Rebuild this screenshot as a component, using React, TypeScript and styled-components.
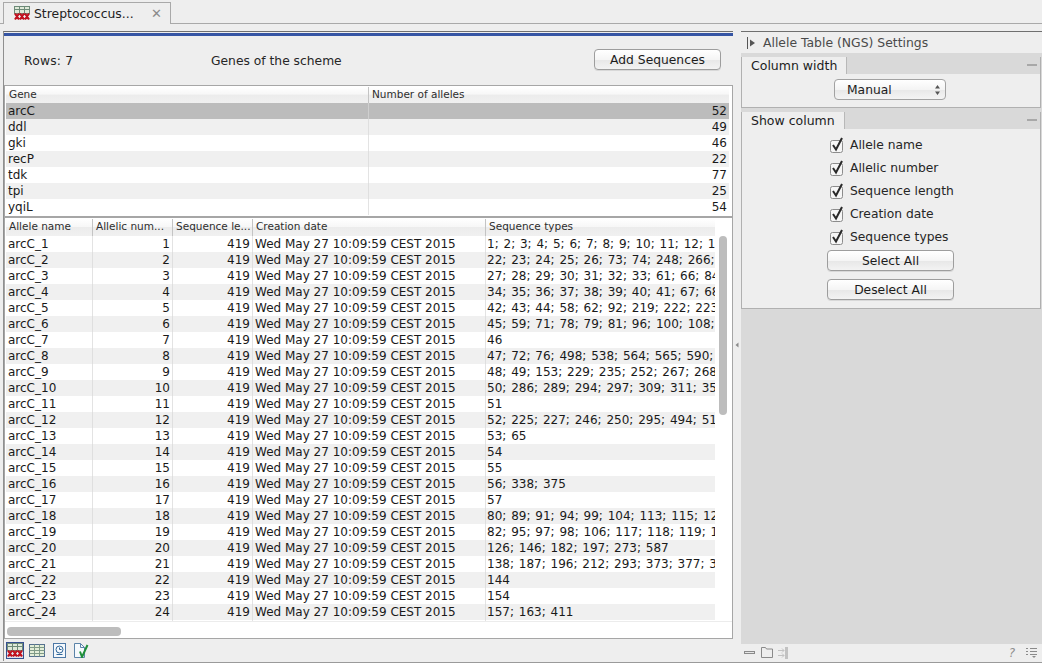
import React from "react";
import styled, { createGlobalStyle } from "styled-components";

const GlobalStyle = createGlobalStyle`
  html, body {
    margin: 0;
    padding: 0;
    height: 100%;
    background: #eeeeee;
    overflow: hidden;
  }
  #root {
    height: 100%;
  }
`;

const Window = styled.div`
  width: 1042px;
  height: 663px;
  display: flex;
  flex-direction: column;
  background: #eeeeee;
  color: #1c1c1c;
  font-family: "DejaVu Sans", Verdana, sans-serif;
  font-size: 12px;
  overflow: hidden;
`;

const TabBar = styled.div`
  height: 24px;
  flex-shrink: 0;
  display: flex;
  padding: 2px 0 0 3px;
  box-sizing: border-box;
  border-bottom: 1px solid #a9a9a9;
`;

const Tab = styled.div`
  width: 168px;
  height: 22px;
  margin-bottom: -1px;
  box-sizing: border-box;
  display: flex;
  align-items: center;
  gap: 4px;
  padding: 0 8px 1px 10px;
  background: #eeeeee;
  border: 1px solid #a9a9a9;
  border-bottom: none;
  font-size: 12.4px;
`;

const TabTitle = styled.span`
  flex: 1;
  color: #222;
`;

const TabClose = styled.span`
  color: #8a8a8a;
  font-size: 13px;
  line-height: 1;
`;

const Body = styled.div`
  flex: 1;
  display: flex;
  min-height: 0;
  padding: 7px 0 1px 3px;
  border-bottom: 1px solid #9a9a9a;
`;

const LeftPanel = styled.div`
  width: 730px;
  flex-shrink: 0;
  display: flex;
  flex-direction: column;
  box-sizing: border-box;
  border-left: 1px solid #8f8f8f;
  border-top: 1px solid #6f6f6f;
`;

const BlueBar = styled.div`
  height: 3px;
  margin-top: 1px;
  background: #3655a4;
  flex-shrink: 0;
`;

const SummaryBar = styled.div`
  height: 49px;
  flex-shrink: 0;
  box-sizing: border-box;
  display: flex;
  align-items: center;
  padding: 0 12px 2px 20px;
  font-size: 12.3px;
  color: #262626;
`;

const RowCount = styled.span`
  width: 187px;
  padding-top: 2px;
  letter-spacing: 0.2px;
`;

const SummaryTitle = styled.span`
  flex: 1;
  padding-top: 2px;
`;

const PushButton = styled.button<{ $width: number }>`
  width: ${(p) => p.$width}px;
  height: 21px;
  padding: 0;
  box-sizing: border-box;
  border: 1px solid #9d9d9d;
  border-radius: 4px;
  background: linear-gradient(#ffffff, #f5f5f5 50%, #e8e8e8 55%, #f3f3f3);
  box-shadow: 0 1px 0 #d8d8d8;
  font-family: inherit;
  font-size: 12.3px;
  color: #1c1c1c;
`;

const TableFrame = styled.div<{ $height?: number }>`
  position: relative;
  flex: ${(p) => (p.$height ? `0 0 ${p.$height}px` : "1")};
  min-height: 0;
  overflow: hidden;
  box-sizing: border-box;
  background: #ffffff;
  border: 1px solid #a6a6a6;
  padding: 1px 3px 0 1px;
`;

const HeaderRow = styled.div<{ $columns: string; $height: number }>`
  display: grid;
  grid-template-columns: ${(p) => p.$columns};
  height: ${(p) => p.$height}px;
  box-sizing: border-box;
  background: linear-gradient(#ffffff, #f7f7f7 45%, #ececec 50%, #f0f0f0);
  font-size: 10.5px;
  color: #2e2e2e;
`;

const HeaderCell = styled.div`
  padding: 0 0 0 3px;
  line-height: 15px;
  white-space: nowrap;
  overflow: hidden;
  border-left: 1px solid #c4c4c4;
  &:first-child {
    border-left: none;
  }
`;

const DataRow = styled.div<{ $columns: string; $selected?: boolean; $odd: boolean }>`
  display: grid;
  grid-template-columns: ${(p) => p.$columns};
  height: 16px;
  line-height: 17px;
  background: ${(p) => (p.$selected ? "#bcbcbc" : p.$odd ? "#f0f0f0" : "#ffffff")};
  font-size: 12px;
  color: #1a1a1a;
  white-space: nowrap;
`;

const Cell = styled.div<{ $right?: boolean }>`
  padding: 0 2px;
  overflow: hidden;
  text-align: ${(p) => (p.$right ? "right" : "left")};
  border-left: 1px solid rgba(215, 215, 215, 0.7);
  &:first-child {
    border-left: none;
  }
`;

const TypesCell = styled(Cell)`
  padding-left: 1px;
  word-spacing: 1px;
`;

const AlleleHeaderWrap = styled.div`
  width: 709px;
`;

const AlleleRows = styled.div`
  width: 709px;
`;

const VerticalThumb = styled.div`
  position: absolute;
  top: 18px;
  right: 5px;
  width: 8px;
  height: 179px;
  border-radius: 4px;
  background: #bdbdbd;
`;

const HorizontalTrack = styled.div`
  position: absolute;
  left: 0;
  right: 0;
  bottom: 0;
  height: 16px;
  background: #ffffff;
  border-top: 1px solid #ececec;
`;

const HorizontalThumb = styled.div`
  position: absolute;
  left: 2px;
  bottom: 2px;
  width: 114px;
  height: 9px;
  border-radius: 4px;
  background: #bdbdbd;
`;

const ViewToolbar = styled.div`
  height: 22px;
  flex-shrink: 0;
  display: flex;
  align-items: center;
  gap: 4px;
  padding-left: 2px;
`;

const ViewButton = styled.div<{ $active?: boolean }>`
  width: 18px;
  height: 17px;
  display: flex;
  align-items: center;
  justify-content: center;
  box-sizing: border-box;
  border: 1px solid ${(p) => (p.$active ? "#35508f" : "transparent")};
  background: ${(p) => (p.$active ? "#dfe3ee" : "transparent")};
`;

const Splitter = styled.div`
  width: 8px;
  flex-shrink: 0;
  display: flex;
  align-items: center;
  justify-content: center;
  padding-bottom: 2px;
`;

const SidePanel = styled.div`
  flex: 1;
  min-width: 0;
  display: flex;
  flex-direction: column;
  border-top: 1px solid #6f6f6f;
`;

const SideHeader = styled.div`
  height: 21px;
  flex-shrink: 0;
  display: flex;
  align-items: center;
  gap: 6px;
  padding-left: 6px;
  font-size: 12.4px;
  color: #4a4a4a;
`;

const SideContent = styled.div`
  flex: 1;
  min-height: 0;
  background: #d9d9d9;
  padding-top: 4px;
  display: flex;
  flex-direction: column;
  gap: 4px;
`;

const Group = styled.section`
  margin-right: 1px;
  background: #eeeeee;
  border: 1px solid #b0b0b0;
  border-top: none;
`;

const GroupTitleRow = styled.div`
  height: 17px;
  display: flex;
  background: #d9d9d9;
`;

const GroupTitle = styled.div`
  padding: 0 9px;
  background: #eeeeee;
  border-right: 1px solid #b8b8b8;
  font-size: 12.5px;
  line-height: 17px;
  color: #1c1c1c;
`;

const Collapse = styled.div`
  margin: 7px 3px 0 auto;
  width: 10px;
  height: 2px;
  background: #a8a8a8;
`;

const SelectBox = styled.div`
  width: 112px;
  height: 21px;
  margin: 5px 0 7px 92px;
  box-sizing: border-box;
  display: flex;
  align-items: center;
  justify-content: space-between;
  padding: 0 4px 0 12px;
  border: 1px solid #a2a2a2;
  border-radius: 4px;
  background: linear-gradient(#ffffff, #f4f4f4 50%, #e9e9e9 55%, #f4f4f4);
  font-size: 12.3px;
`;

const CheckList = styled.div`
  width: 127px;
  margin-left: 85px;
  padding: 4px 0 8px;
  display: flex;
  flex-direction: column;
`;

const CheckRow = styled.label`
  height: 23px;
  display: flex;
  align-items: center;
  gap: 5px;
  padding-left: 2px;
  font-size: 12.3px;
  color: #262626;
`;

const ButtonStack = styled.div`
  display: flex;
  flex-direction: column;
  gap: 8px;
  margin-top: 2px;
`;

const SideFooter = styled.div`
  height: 17px;
  flex-shrink: 0;
  display: flex;
  align-items: center;
  gap: 5px;
  padding: 0 5px 0 3px;
`;

const FooterSpacer = styled.div`
  flex: 1;
`;

const HelpMark = styled.span`
  color: #8f8f8f;
  font-size: 12px;
  margin-right: 6px;
  font-style: italic;
`;

const GENE_COLUMNS = "362px 1fr";
const ALLELE_COLUMNS = "86px 80px 80px 233px 230px";

const genes: [string, number][] = [
  ["arcC", 52],
  ["ddl", 49],
  ["gki", 46],
  ["recP", 22],
  ["tdk", 77],
  ["tpi", 25],
  ["yqiL", 54],
];

const sequenceTypes = [
  "1; 2; 3; 4; 5; 6; 7; 8; 9; 10; 11; 12; 13; 14; 15",
  "22; 23; 24; 25; 26; 73; 74; 248; 266; 271; 272",
  "27; 28; 29; 30; 31; 32; 33; 61; 66; 84; 85; 86",
  "34; 35; 36; 37; 38; 39; 40; 41; 67; 68; 69; 70",
  "42; 43; 44; 58; 62; 92; 219; 222; 223; 224; 225",
  "45; 59; 71; 78; 79; 81; 96; 100; 108; 109; 110",
  "46",
  "47; 72; 76; 498; 538; 564; 565; 590; 591; 592",
  "48; 49; 153; 229; 235; 252; 267; 268; 269; 270",
  "50; 286; 289; 294; 297; 309; 311; 351; 352; 353",
  "51",
  "52; 225; 227; 246; 250; 295; 494; 512; 513; 514",
  "53; 65",
  "54",
  "55",
  "56; 338; 375",
  "57",
  "80; 89; 91; 94; 99; 104; 113; 115; 121; 122; 123",
  "82; 95; 97; 98; 106; 117; 118; 119; 120; 124; 125",
  "126; 146; 182; 197; 273; 587",
  "138; 187; 196; 212; 293; 373; 377; 378; 379; 380",
  "144",
  "154",
  "157; 163; 411",
  "168; 170; 183; 190; 203; 205",
];

const TableIcon = () => (
  <svg width="16" height="15" viewBox="0 0 16 15">
    <rect x="0.5" y="0.5" width="15" height="7" fill="#dfe9d8" stroke="#6d8a78" />
    <path d="M0.5 3.5h15M5.5 0.5v7M10.5 0.5v7" stroke="#6d8a78" fill="none" />
    <path
      d="M1 7.5l4 6M5 7.5l-4 6M6 7.5l4 6M10 7.5l-4 6M11 7.5l4 6M15 7.5l-4 6"
      stroke="#c1121f"
      strokeWidth="2.2"
      fill="none"
    />
  </svg>
);

const GridIcon = () => (
  <svg width="16" height="13" viewBox="0 0 16 13">
    <rect x="0.5" y="0.5" width="15" height="12" fill="#e3eed8" stroke="#54708f" />
    <path d="M0.5 3.5h15M0.5 6.5h15M0.5 9.5h15M5.5 0.5v12M10.5 0.5v12" stroke="#7f9a87" fill="none" />
  </svg>
);

const HistoryIcon = () => (
  <svg width="13" height="15" viewBox="0 0 13 15">
    <rect x="0.5" y="0.5" width="12" height="14" fill="#f4f8fc" stroke="#4d78a6" />
    <circle cx="6.5" cy="6.5" r="3.5" fill="none" stroke="#2f6699" />
    <path d="M6.5 4.5v2h2M3.5 11.5h6" stroke="#2f6699" fill="none" />
  </svg>
);

const ValidateIcon = () => (
  <svg width="15" height="15" viewBox="0 0 15 15">
    <path d="M0.5 0.5h6l4 4v10h-10z" fill="#f5f9fc" stroke="#5a83a8" />
    <path d="M6.5 0.5v4h4" fill="none" stroke="#5a83a8" />
    <path d="M6 8.5l2 5.5L13.5 2" fill="none" stroke="#1f8f3a" strokeWidth="2" />
  </svg>
);

const SideArrow = () => (
  <svg width="10" height="12" viewBox="0 0 10 12">
    <path d="M0.5 0v12" stroke="#555" />
    <path d="M3 2.5l5 3.5-5 3.5z" fill="#555" />
  </svg>
);

const Spinner = () => (
  <svg width="7" height="12" viewBox="0 0 7 12">
    <path d="M3.5 1L6 4.5H1zM3.5 11L1 7.5h5z" fill="#555" />
  </svg>
);

const SplitterArrow = () => (
  <svg width="4" height="6" viewBox="0 0 4 6">
    <path d="M3.5 0.5v5L0.5 3z" fill="#8b8b8b" />
  </svg>
);

const CheckBox = () => (
  <svg width="16" height="17" viewBox="0 0 16 17">
    <rect x="1.5" y="4.5" width="12" height="12" rx="2" fill="#f6f6f6" stroke="#8c8c8c" />
    <path d="M4 9l3 4.5L13 2" fill="none" stroke="#2a2a2a" strokeWidth="2" />
  </svg>
);

const MinimizeIcon = () => (
  <svg width="12" height="6" viewBox="0 0 12 6">
    <rect x="0.5" y="1.5" width="10" height="2" fill="#e6e6e6" stroke="#8a8a8a" />
  </svg>
);

const FolderIcon = () => (
  <svg width="12" height="11" viewBox="0 0 12 11">
    <path d="M0.5 0.5h4l1 1.5h6v8.5h-11z" fill="none" stroke="#8a8a8a" />
  </svg>
);

const DockIcon = () => (
  <svg width="11" height="12" viewBox="0 0 11 12">
    <path d="M0 3.5h6M0 8.5h6M4 1.5l2 2-2 2M4 6.5l2 2-2 2" fill="none" stroke="#c2c2c2" />
    <rect x="7.5" y="0.5" width="2" height="11" fill="#c2c2c2" stroke="#c2c2c2" />
  </svg>
);

const MenuIcon = () => (
  <svg width="11" height="11" viewBox="0 0 11 11">
    <path
      d="M0 1.5h2M4 1.5h7M0 4.5h2M4 4.5h7M0 7.5h2M4 7.5h7"
      stroke="#8a8a8a"
      fill="none"
    />
    <path d="M6 9h4l-2 2z" fill="#8a8a8a" />
  </svg>
);

const columnOptions = [
  "Allele name",
  "Allelic number",
  "Sequence length",
  "Creation date",
  "Sequence types",
];

const App: React.FC = () => {
  return (
    <Window>
      <GlobalStyle />
      <TabBar>
        <Tab>
          <TableIcon />
          <TabTitle>Streptococcus...</TabTitle>
          <TabClose>✕</TabClose>
        </Tab>
      </TabBar>
      <Body>
        <LeftPanel>
          <BlueBar />
          <SummaryBar>
            <RowCount>Rows: 7</RowCount>
            <SummaryTitle>Genes of the scheme</SummaryTitle>
            <PushButton $width={127}>Add Sequences</PushButton>
          </SummaryBar>
          <TableFrame $height={132}>
            <HeaderRow $columns={GENE_COLUMNS} $height={16}>
              <HeaderCell>Gene</HeaderCell>
              <HeaderCell>Number of alleles</HeaderCell>
            </HeaderRow>
            {genes.map(([name, count], i) => (
              <DataRow key={name} $columns={GENE_COLUMNS} $selected={i === 0} $odd={i % 2 === 1}>
                <Cell>{name}</Cell>
                <Cell $right>{count}</Cell>
              </DataRow>
            ))}
          </TableFrame>
          <TableFrame>
            <AlleleHeaderWrap>
              <HeaderRow $columns={ALLELE_COLUMNS} $height={17}>
                <HeaderCell>Allele name</HeaderCell>
                <HeaderCell>Allelic num...</HeaderCell>
                <HeaderCell>Sequence le...</HeaderCell>
                <HeaderCell>Creation date</HeaderCell>
                <HeaderCell>Sequence types</HeaderCell>
              </HeaderRow>
            </AlleleHeaderWrap>
            <AlleleRows>
              {sequenceTypes.map((types, i) => (
                <DataRow key={i} $columns={ALLELE_COLUMNS} $odd={i % 2 === 1}>
                  <Cell>arcC_{i + 1}</Cell>
                  <Cell $right>{i + 1}</Cell>
                  <Cell $right>419</Cell>
                  <Cell>Wed May 27 10:09:59 CEST 2015</Cell>
                  <TypesCell>{types}</TypesCell>
                </DataRow>
              ))}
            </AlleleRows>
            <VerticalThumb />
            <HorizontalTrack />
            <HorizontalThumb />
          </TableFrame>
          <ViewToolbar>
            <ViewButton $active>
              <TableIcon />
            </ViewButton>
            <ViewButton>
              <GridIcon />
            </ViewButton>
            <ViewButton>
              <HistoryIcon />
            </ViewButton>
            <ViewButton>
              <ValidateIcon />
            </ViewButton>
          </ViewToolbar>
        </LeftPanel>
        <Splitter>
          <SplitterArrow />
        </Splitter>
        <SidePanel>
          <SideHeader>
            <SideArrow />
            Allele Table (NGS) Settings
          </SideHeader>
          <SideContent>
            <Group>
              <GroupTitleRow>
                <GroupTitle>Column width</GroupTitle>
                <Collapse />
              </GroupTitleRow>
              <SelectBox>
                Manual
                <Spinner />
              </SelectBox>
            </Group>
            <Group>
              <GroupTitleRow>
                <GroupTitle>Show column</GroupTitle>
                <Collapse />
              </GroupTitleRow>
              <CheckList>
                {columnOptions.map((option) => (
                  <CheckRow key={option}>
                    <CheckBox />
                    {option}
                  </CheckRow>
                ))}
                <ButtonStack>
                  <PushButton $width={127}>Select All</PushButton>
                  <PushButton $width={127}>Deselect All</PushButton>
                </ButtonStack>
              </CheckList>
            </Group>
          </SideContent>
          <SideFooter>
            <MinimizeIcon />
            <FolderIcon />
            <DockIcon />
            <FooterSpacer />
            <HelpMark>?</HelpMark>
            <MenuIcon />
          </SideFooter>
        </SidePanel>
      </Body>
    </Window>
  );
};

export default App;
